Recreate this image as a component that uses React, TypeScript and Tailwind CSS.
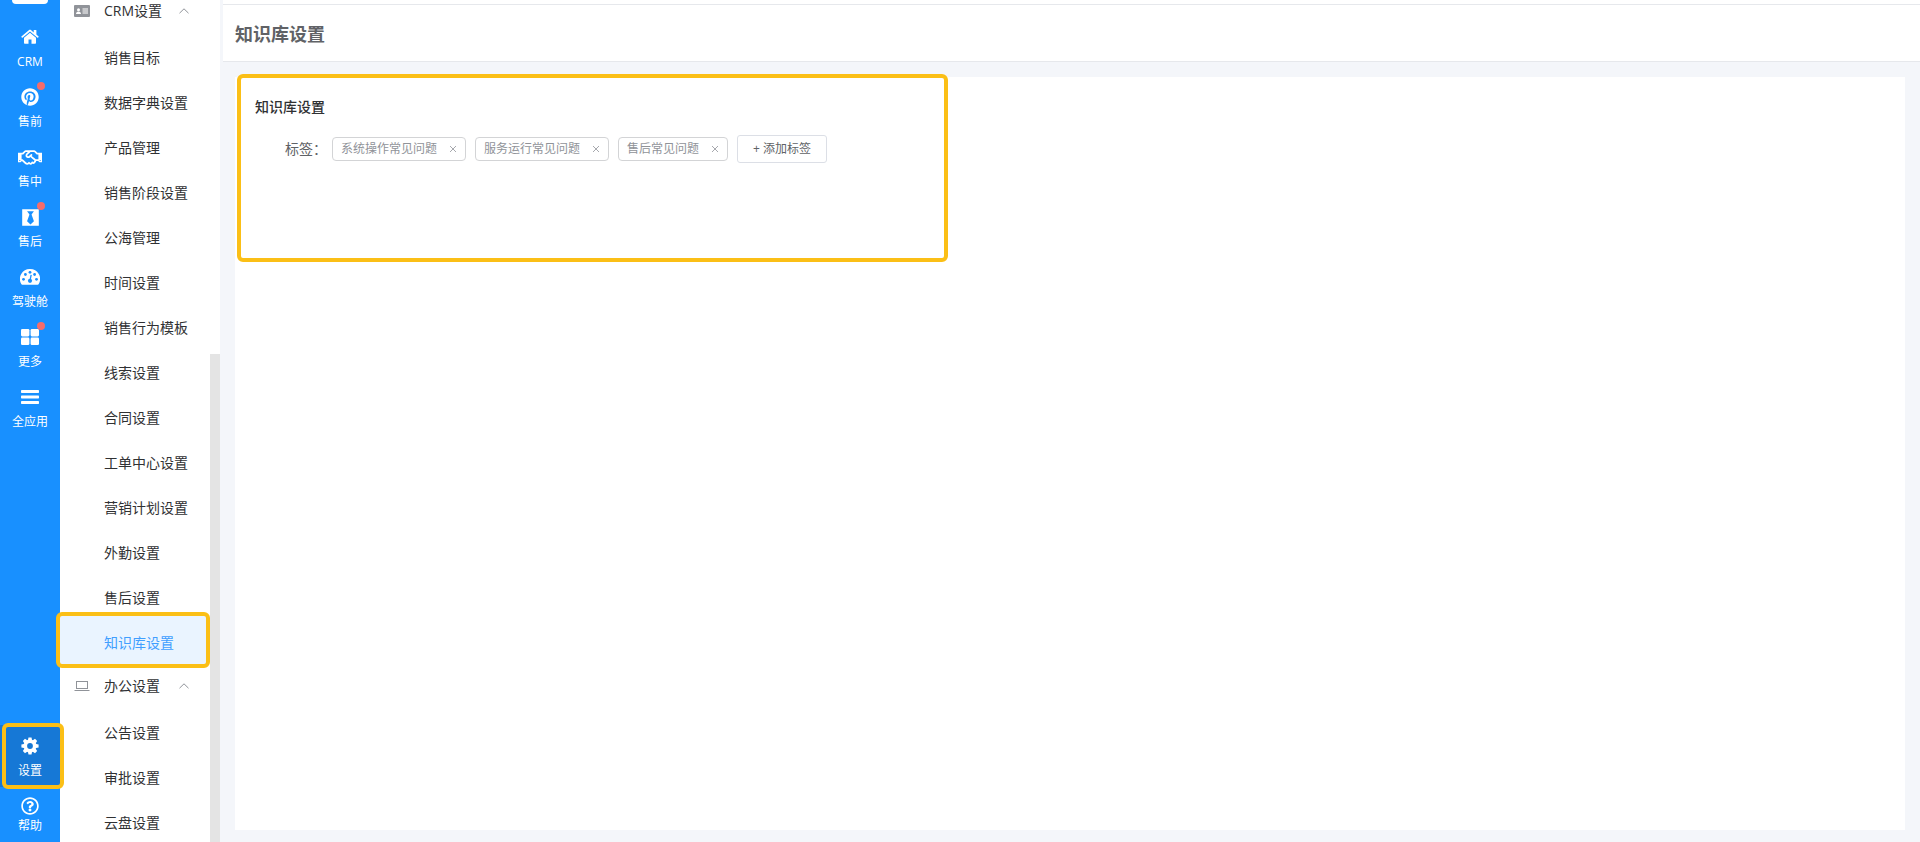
import React, { useState } from 'react';
import { FaPinterest, FaRegHandshake, FaBlackTie, FaRegQuestionCircle } from 'react-icons/fa';

interface RailItem {
  label: string;
  icon: React.ReactNode;
  dot?: boolean;
}

const IconHome = () => (
  <svg viewBox="0 0 18 16" className="h-4 w-[18px]" fill="currentColor">
    <path d="M9 3.800 3 8.800V14c0 .5.300.8.800.8h3.700v-4.200h3v4.200h3.700c.5 0 .8-.300.8-.8V8.800z" />
    <path d="M17.600 7.500 15.400 5.600V1.500c0-.3-.2-.4-.4-.4h-1.900c-.3 0-.4.1-.4.4v1.900L10.200 1.300c-.7-.6-1.700-.6-2.400 0L.4 7.500c-.2.1-.2.400 0 .5l.6.700c.1.2.4.2.5.1L9 2.600l7.500 6.200c.1.1.4.1.5-.1l.6-.7c.200-.1.200-.400 0-.5z" />
  </svg>
);

const IconGauge = () => (
  <svg viewBox="0 0 20 16" className="h-4 w-5">
    <path d="M10 0a10 10 0 0 0-8.600 15.200c.200.300.5.500.9.500h15.400c.400 0 .700-.200.900-.500A10 10 0 0 0 10 0z" fill="currentColor" />
    <g fill="#1890ff">
      <circle cx="3.500" cy="10.300" r="1.400" />
      <circle cx="5.400" cy="5.500" r="1.400" />
      <circle cx="10" cy="3.300" r="1.400" />
      <circle cx="14.600" cy="5.500" r="1.400" />
      <circle cx="16.500" cy="10.300" r="1.400" />
      <circle cx="10" cy="11.800" r="2.100" />
      <path d="m10.500 5.700 1.300.3-1.200 6-1.300-.3z" />
    </g>
  </svg>
);

const IconGrid = () => (
  <svg viewBox="0 0 18 16" className="h-4 w-[18px]" fill="currentColor">
    <rect width="8.400" height="7.400" rx="1.300" />
    <rect x="9.600" width="8.400" height="7.400" rx="1.300" />
    <rect y="8.600" width="8.400" height="7.400" rx="1.300" />
    <rect x="9.600" y="8.600" width="8.400" height="7.400" rx="1.300" />
  </svg>
);

const IconBars = () => (
  <svg viewBox="0 0 18 14" className="h-[14px] w-[18px]" fill="currentColor">
    <rect width="18" height="3" rx=".7" />
    <rect y="5.500" width="18" height="3" rx=".7" />
    <rect y="11" width="18" height="3" rx=".7" />
  </svg>
);

const IconCog = () => (
  <svg viewBox="-9 -9 18 18" className="size-[18px]">
    <g fill="currentColor">
      <circle r="6.500" />
      {[0, 45, 90, 135].map((angle) => (
        <path key={angle} d="M-2-6-1.500-8.600h3L2-6v12L1.500 8.600h-3L-2 6z" transform={`rotate(${angle})`} />
      ))}
    </g>
    <circle r="2.900" fill="#1678d6" />
  </svg>
);

const IconCard = () => (
  <svg viewBox="0 0 16 12" className="h-3 w-4">
    <rect width="16" height="12" rx="1" fill="#909399" />
    <g fill="#fff">
      <circle cx="4.500" cy="4.800" r="1.500" />
      <path d="M2 9c0-1.800 1-2.600 2.500-2.600S7 7.200 7 9z" />
      <rect x="8.500" y="3.500" width="5.500" height="1" />
      <rect x="8.500" y="5.500" width="5.500" height="1" />
      <rect x="8.500" y="7.500" width="5.500" height="1" />
    </g>
  </svg>
);

const IconLaptop = () => (
  <svg viewBox="0 0 16 12" className="h-3 w-4" fill="none" stroke="#909399">
    <rect x="2.500" y="1.500" width="11" height="7" />
    <path d="M.5 10.500h15" />
  </svg>
);

const IconArrow = () => (
  <svg viewBox="0 0 10 6" className="h-[6px] w-[10px]" fill="none" stroke="#909399">
    <path d="m.5 5.200 4.500-4.400 4.500 4.400" />
  </svg>
);

const IconClose = () => (
  <svg viewBox="0 0 8 8" className="size-2" fill="none" stroke="#909399" strokeWidth=".8">
    <path d="m1 1 6 6M7 1 1 7" />
  </svg>
);

const railItems: RailItem[] = [
  { label: 'CRM', icon: <IconHome /> },
  { label: '售前', icon: <FaPinterest size={18} />, dot: true },
  { label: '售中', icon: <FaRegHandshake size={25} /> },
  { label: '售后', icon: <FaBlackTie size={19} />, dot: true },
  { label: '驾驶舱', icon: <IconGauge /> },
  { label: '更多', icon: <IconGrid />, dot: true },
  { label: '全应用', icon: <IconBars /> }
];

const menuGroups = [
  {
    title: 'CRM设置',
    icon: <IconCard />,
    items: [
      '销售目标', '数据字典设置', '产品管理', '销售阶段设置', '公海管理', '时间设置', '销售行为模板',
      '线索设置', '合同设置', '工单中心设置', '营销计划设置', '外勤设置', '售后设置', '知识库设置'
    ]
  },
  {
    title: '办公设置',
    icon: <IconLaptop />,
    items: ['公告设置', '审批设置', '云盘设置']
  }
];

const Rail: React.FC = () => (
  <nav className="flex w-[60px] shrink-0 flex-col bg-[#1890ff] text-xs text-white">
    <div className="mx-3 mb-3 h-1 shrink-0 rounded-b bg-white" />
    {railItems.map((item) => (
      <button key={item.label} type="button" className="flex h-[60px] shrink-0 cursor-pointer flex-col items-center pt-[9px]">
        <span className="relative flex h-6 w-6 items-center justify-center">
          {item.icon}
          {item.dot && <i className="absolute -top-[3px] -right-[3px] size-2 rounded-full bg-[#f56c6c]" />}
        </span>
        <span className="mt-[5px] leading-4">{item.label}</span>
      </button>
    ))}
    <button type="button" className="relative mt-auto flex h-[62px] shrink-0 cursor-pointer flex-col items-center bg-[#1678d6] pt-[9px]">
      <span className="flex h-6 items-center"><IconCog /></span>
      <span className="mt-[5px] leading-4">设置</span>
      <i className="absolute -top-[2px] -right-1 -bottom-[2px] left-[2px] z-10 rounded-md border-4 border-[#fbbf16]" />
    </button>
    <button type="button" className="flex h-[55px] shrink-0 cursor-pointer flex-col items-center pt-[7px]">
      <span className="flex h-6 items-center"><FaRegQuestionCircle size={18} /></span>
      <span className="leading-4">帮助</span>
    </button>
  </nav>
);

const SideMenu: React.FC = () => (
  <aside className="flex w-40 shrink-0 bg-white text-sm text-[#303133]">
    <div className="-mt-[10px] flex-1">
      {menuGroups.map((group) => (
        <section key={group.title}>
          <button type="button" className="flex h-[45px] w-full cursor-pointer items-center pb-1 pl-[14px]">
            {group.icon}
            <span className="ml-[14px] w-[75px] text-left">{group.title}</span>
            <IconArrow />
          </button>
          {group.items.map((item) => (
            <a key={item} href="#" className={`relative flex h-[45px] items-center pl-11 ${item === '知识库设置' ? 'text-[#409eff]' : ''}`}>
              {item === '知识库设置' && (
                <i className="absolute -top-2 right-0 -bottom-[3px] -left-1 z-10 rounded-md border-4 border-[#fbbf16] bg-[#eaf4ff]" />
              )}
              <span className="relative z-10">{item}</span>
            </a>
          ))}
        </section>
      ))}
    </div>
    <div className="mt-[354px] w-[10px] bg-[#e4e4e4]" />
  </aside>
);

const App: React.FC = () => {
  const [tags, setTags] = useState(['系统操作常见问题', '服务运行常见问题', '售后常见问题']);

  const removeTag = (tag: string) => {
    setTags(tags.filter((t) => t !== tag));
  };

  return (
    <div className="flex h-screen overflow-hidden bg-[#f4f6fa] font-['Open_Sans','Noto_Sans_CJK_SC',sans-serif]">
      <Rail />
      <SideMenu />
      <div className="ml-[3px] flex min-w-0 flex-1 flex-col">
        <div className="h-1 shrink-0 bg-white" />
        <header className="flex h-[58px] shrink-0 items-center border-y border-[#e6e8ec] bg-white px-3 pt-px">
          <h1 className="text-lg font-bold text-[#606266]">知识库设置</h1>
        </header>
        <main className="mt-[15px] mr-[15px] mb-3 ml-3 flex-1 bg-white">
          <section className="relative ml-[2px] h-[185px] w-[711px] px-[18px] pt-5">
            <i className="absolute inset-x-0 -top-[3px] bottom-0 rounded-md border-4 border-[#fbbf16]" />
            <div className="relative">
              <h2 className="text-sm leading-5 font-medium text-[#303133]">知识库设置</h2>
              <div className="mt-[18px] flex h-7 items-center text-xs">
                <span className="ml-[30px] w-[47px] text-sm text-[#606266]">标签：</span>
                {tags.map((tag) => (
                  <span key={tag} className="mr-[9px] flex h-6 items-center rounded border border-[#d3d4d6] px-2 text-[#909399]">
                    {tag}
                    <button type="button" aria-label={`删除${tag}`} onClick={() => removeTag(tag)} className="ml-3 cursor-pointer">
                      <IconClose />
                    </button>
                  </span>
                ))}
                <button type="button" className="h-7 cursor-pointer rounded-[3px] border border-[#dcdfe6] px-[15px] text-[#606266]">
                  + 添加标签
                </button>
              </div>
            </div>
          </section>
        </main>
      </div>
    </div>
  );
};

export default App;
